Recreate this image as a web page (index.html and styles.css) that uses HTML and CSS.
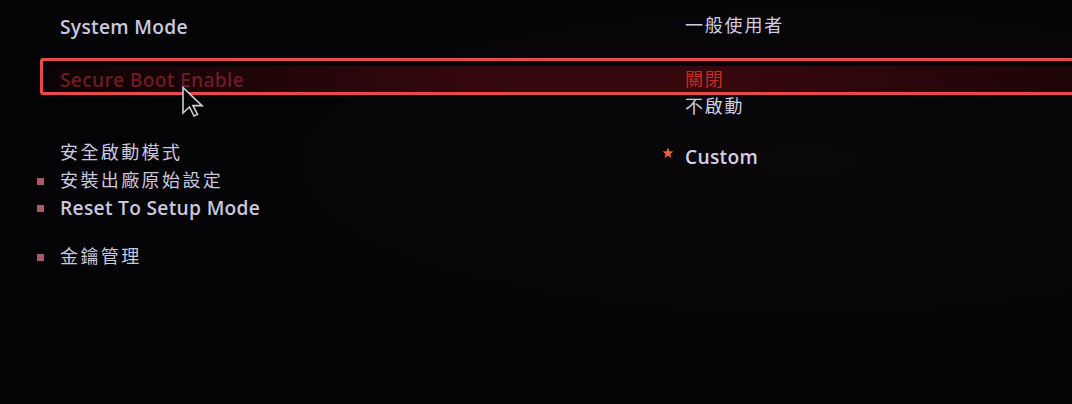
FILE: index.html
```html
<!DOCTYPE html>
<html lang="zh-Hant">
<head>
<meta charset="utf-8">
<title>Secure Boot</title>
<link rel="stylesheet" href="styles.css">
</head>
<body>
<div class="screen">
  <div class="row row-top">
    <div class="label en">System Mode</div>
    <div class="value cjk">一般使用者</div>
  </div>

  <div class="sel-box">
    <div class="sel-band">
      <div class="sel-label en">Secure Boot Enable</div>
      <div class="sel-value cjk">關閉</div>
    </div>
  </div>

  <div class="row row-sub">
    <div></div>
    <div class="value cjk">不啟動</div>
  </div>

  <div class="lower">
    <ul class="menu">
      <li class="item"><span class="mark"></span><span class="cjk wide">安全啟動模式</span></li>
      <li class="item"><span class="mark"><i class="bullet"></i></span><span class="cjk wide">安裝出廠原始設定</span></li>
      <li class="item"><span class="mark"><i class="bullet"></i></span><span class="en">Reset To Setup Mode</span></li>
      <li class="item item-gap"><span class="mark"><i class="bullet"></i></span><span class="cjk wide">金鑰管理</span></li>
    </ul>
    <div class="mode">
      <svg class="star" viewBox="0 0 12 12" width="12" height="12"><path d="M6 0.6 L7.5 4.2 L11.4 4.5 L8.4 7 L9.4 10.9 L6 8.8 L2.6 10.9 L3.6 7 L0.6 4.5 L4.5 4.2 Z" fill="#e8643a"/></svg>
      <span class="en">Custom</span>
    </div>
  </div>

  <svg class="cursor" viewBox="0 0 26 32" width="26" height="32">
    <path d="M2 1.5 L2 27 L8.5 21 L13 30 L16.5 28.4 L12 19.6 L21 19.6 Z" fill="#050505" stroke="#cfcfd4" stroke-width="1.6" stroke-linejoin="miter"/>
  </svg>
</div>
</body>
</html>
```

FILE: styles.css
```css
html, body {
  margin: 0;
  padding: 0;
}

body {
  background: #040305;
  overflow: hidden;
  width: 1072px;
  height: 404px;
  font-family: "Open Sans", "Noto Sans CJK TC", sans-serif;
  color: #c9c8dd;
}

.screen {
  position: relative;
  width: 1072px;
  height: 404px;
  background: radial-gradient(ellipse at 75% 40%, #0a0709 0%, #040305 60%);
}

.en {
  font-family: "Open Sans", "Noto Sans CJK TC", sans-serif;
  font-size: 19.2px;
  font-weight: 600;
  letter-spacing: 0.3px;
}

.cjk {
  font-family: "Noto Sans CJK TC", sans-serif;
  font-size: 18px;
  line-height: 20px;
  letter-spacing: 1.8px;
  padding-bottom: 5px;
}

.cjk.wide {
  letter-spacing: 2.4px;
}

.row {
  display: grid;
  grid-template-columns: 685px 1fr;
  align-items: center;
}

.row-top {
  height: 52px;
}

.row-top .label {
  padding-left: 60px;
}

.value {
  color: #cfcde0;
}

.sel-box {
  margin-top: 6px;
  margin-left: 40px;
  width: 1080px;
  height: 37px;
  box-sizing: border-box;
  border: 3px solid #e8494b;
  border-radius: 3px;
}

.sel-band {
  margin-top: 5px;
  height: 26px;
  display: grid;
  grid-template-columns: 642px 1fr;
  align-items: center;
  background: linear-gradient(90deg, rgba(60, 6, 12, 0.15) 0%, rgba(90, 10, 18, 0.55) 40%, rgba(85, 8, 16, 0.6) 65%, rgba(50, 5, 10, 0.45) 100%);
}

.sel-label {
  padding-left: 17px;
  padding-bottom: 1px;
  color: #6c1b22;
}

.sel-value {
  color: #c42c2a;
}

.row-sub {
  height: 20px;
}

.lower {
  margin-top: 25px;
  display: grid;
  grid-template-columns: 662px 1fr;
}

.menu {
  list-style: none;
  margin: 0;
  padding: 0 0 0 37px;
}

.item {
  display: flex;
  align-items: center;
  height: 27.5px;
}

.item .en {
  padding-bottom: 2px;
}

.item-gap {
  margin-top: 21px;
}

.mark {
  width: 23px;
  flex: none;
  display: flex;
  align-items: center;
}

.bullet {
  display: block;
  width: 7px;
  height: 7px;
  background: #a65a68;
}

.mode {
  padding-top: 3px;
  height: 27px;
  display: flex;
  align-items: center;
  gap: 11px;
}

.star {
  margin-top: -8px;
  flex: none;
}

.mode .en {
  color: #d2d0e4;
}

.cursor {
  position: absolute;
  left: 181px;
  top: 86px;
}
```
